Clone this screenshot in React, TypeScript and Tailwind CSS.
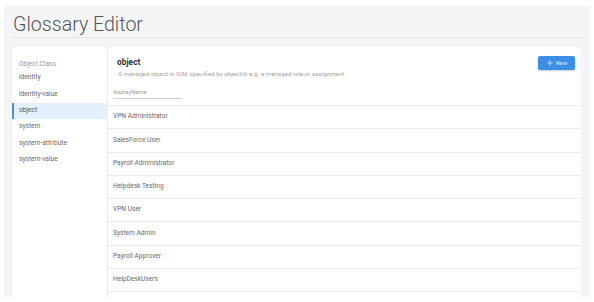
import { Plus } from 'lucide-react';

const classes = ['identity', 'identity-value', 'object', 'system', 'system-attribute', 'system-value'];

const rows = [
    'VPN Administrator',
    'SalesForce User',
    'Payroll Administrator',
    'Helpdesk Testing',
    'VPN User',
    'System Admin',
    'Payroll Approver',
    'HelpDeskUsers',
];

export default function App() {
    return (
        <div className="w-[594px] h-[302px] bg-white pt-[6px] pl-[4px] overflow-hidden font-['Roboto',sans-serif]">
            <div className="w-[586px] h-[291px] bg-[#f4f5f7] px-[8px] pt-[7px] overflow-hidden">
                {/* Title */}
                <h1 className="h-[25px] w-[570px] border-b border-[#e3e4e6] text-[19.6px] leading-[24px] font-light text-[#555] pl-[1px]">
                    Glossary Editor
                </h1>

                {/* Card */}
                <div className="mt-[9px] w-[569px] h-[260px] bg-white flex shadow-[0_0_1px_rgba(0,0,0,0.06)]">
                    {/* Sidebar */}
                    <div className="w-[96px] shrink-0 border-r border-[#ebebeb] pt-[11px]">
                        <div className="px-[7px] text-[6.6px] leading-[12px] text-[#999]">Object Class</div>
                        {classes.map((c) =>
                            c === 'object' ? (
                                <div
                                    key={c}
                                    className="h-[16.4px] flex items-center bg-[#e4f0fb] border-l-2 border-[#4a90e2] pl-[5px] text-[6.6px] text-[#555]"
                                >
                                    {c}
                                </div>
                            ) : (
                                <div key={c} className="h-[16.4px] flex items-center px-[7px] text-[6.6px] text-[#6a6a6a]">
                                    {c}
                                </div>
                            )
                        )}
                    </div>

                    {/* Main */}
                    <div className="flex-1 flex flex-col">
                        <div className="flex justify-between items-start pt-[9px] pl-[5px] pr-[6px]">
                            <div>
                                <div className="pl-[4px] text-[8.4px] leading-[12px] font-bold text-[#333]">object</div>
                                <div className="pl-[5px] text-[6.2px] leading-[10px] text-[#a5a5a5] mt-[1px]">
                                    A managed object in IDM, specified by objectId, e.g. a managed role or assignment.
                                </div>
                                <div className="mt-[7px] mb-[6px] w-[69px] h-[13px] border-b border-[#cfcfcf] flex items-center text-[5.8px] text-[#a0a0a0]">
                                    displayName
                                </div>
                            </div>
                            <button className="w-[37px] h-[14px] rounded-[2px] bg-[#3d8fe6] shadow-[0_1px_2px_rgba(0,0,0,0.2)] flex items-center justify-center gap-[2px] text-white/80 text-[5.8px]">
                                <Plus size={8} strokeWidth={2} className="text-white" />
                                New
                            </button>
                        </div>
                        {rows.map((r) => (
                            <div
                                key={r}
                                className="h-[23.3px] shrink-0 border-t border-[#ececec] flex items-center pl-[5px] text-[6.6px] text-[#6a6a6a]"
                            >
                                {r}
                            </div>
                        ))}
                        <div className="h-[23.3px] shrink-0 border-t border-[#ececec]" />
                    </div>
                </div>
            </div>
        </div>
    );
}
